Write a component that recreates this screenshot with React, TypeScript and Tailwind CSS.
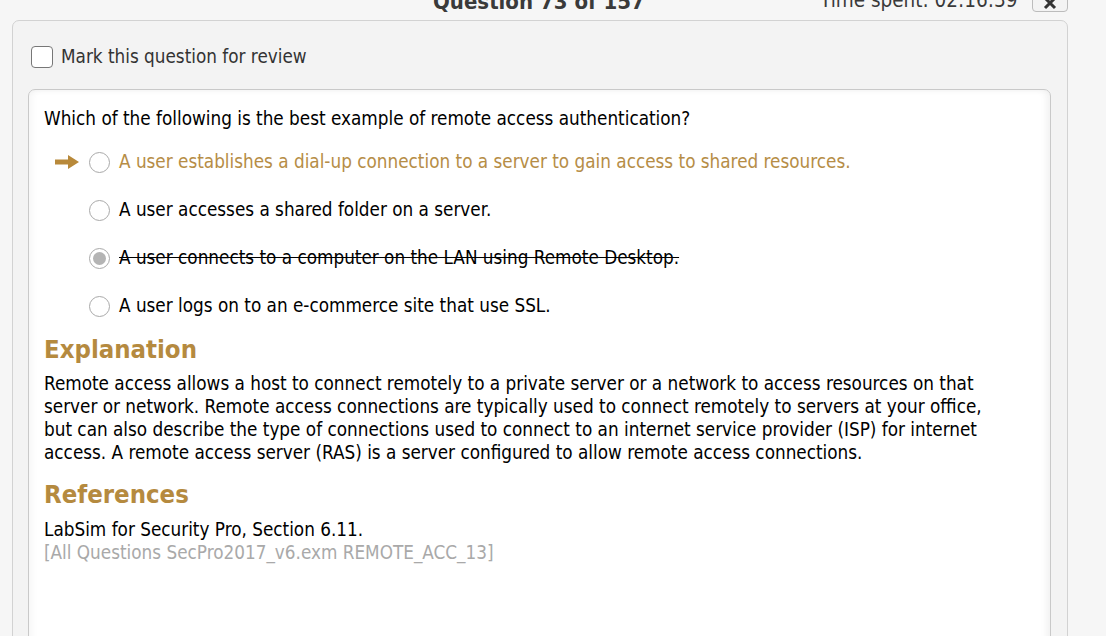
import React from 'react';

const gold = 'text-[#b58a3f]';

interface Option {
  text: string;
  state: 'correct' | 'plain' | 'picked';
}

const options: Option[] = [
  { text: 'A user establishes a dial-up connection to a server to gain access to shared resources.', state: 'correct' },
  { text: 'A user accesses a shared folder on a server.', state: 'plain' },
  { text: 'A user connects to a computer on the LAN using Remote Desktop.', state: 'picked' },
  { text: 'A user logs on to an e-commerce site that use SSL.', state: 'plain' },
];

const Arrow = () => (
  <svg width="24" height="14" viewBox="0 0 24 14">
    <path d="M0 4.5h13V0l11 7-11 7V9.5H0z" fill="#b8893a" />
  </svg>
);

const Radio = ({ checked }: { checked: boolean }) => (
  <span className="flex h-[21px] w-[21px] shrink-0 items-center justify-center rounded-full border border-[#a9a9a9] bg-white">
    {checked && <span className="h-[13px] w-[13px] rounded-full bg-[#b4b4b4]" />}
  </span>
);

const OptionRow = ({ option }: { option: Option }) => (
  <div className="flex h-[48px] items-center">
    <div className="flex w-[45px] shrink-0 items-center pl-[11px]">
      {option.state === 'correct' && <Arrow />}
    </div>
    <Radio checked={option.state === 'picked'} />
    <span
      className={
        option.state === 'correct'
          ? 'ml-[9px] text-[#b68d46]'
          : option.state === 'picked'
            ? 'ml-[9px] text-black line-through'
            : 'ml-[9px] text-black'
      }
    >
      {option.text}
    </span>
  </div>
);

export default function App() {
  return (
    <div
      className="h-[636px] w-[1106px] overflow-hidden bg-[#f6f6f6] text-[18.75px]"
      style={{ fontFamily: '"DejaVu Sans Condensed", Tahoma, "DejaVu Sans", sans-serif' }}
    >
      {/* header, mostly scrolled off the top */}
      <div className="relative flex h-[20px] items-end overflow-hidden">
        <div className="absolute left-[433px] bottom-[7px] text-[22px] font-bold leading-none text-[#3a3a3a]">
          Question 73 of 157
        </div>
        <div className="absolute left-[820px] bottom-[10px] text-[20.5px] leading-none text-[#3a3a3a]">
          Time spent: 02:16:39
        </div>
        <div className="absolute left-[1032px] bottom-[8px] flex h-[26px] w-[36px] items-end justify-center rounded-[4px] border border-[#bcbcbc] bg-[#f3f3f3] pb-[1px]">
          <svg width="14" height="14" viewBox="0 0 14 14">
            <path d="M2 2l10 10M12 2L2 12" stroke="#333" strokeWidth="3" />
          </svg>
        </div>
      </div>

      <div className="ml-[12px] h-[640px] w-[1056px] rounded-t-[7px] border border-[#d2d2d2] bg-[#f3f3f3] px-[15px] pt-[22px]">
        <label className="ml-[3px] flex items-center text-[#333]">
          <span className="h-[22px] w-[22px] rounded-[4px] border border-[#777] bg-white" />
          <span className="ml-[8px]">Mark this question for review</span>
        </label>

        <div className="mt-[18px] mr-[1px] h-[600px] rounded-t-[7px] border border-[#c9c9c9] bg-white px-[15px] pt-[17px] text-black shadow-[inset_-4px_0_6px_rgba(0,0,0,0.05),inset_4px_0_6px_rgba(0,0,0,0.03)]">
          <p className="leading-[23px]">Which of the following is the best example of remote access authentication?</p>
          <div className="mt-[8px]">
            {options.map((o) => (
              <OptionRow key={o.text} option={o} />
            ))}
          </div>

          <h2 className={`mt-[2px] mb-[6px] text-[25.5px] font-bold leading-[34px] ${gold}`}>Explanation</h2>
          <p className="leading-[23px]">
            Remote access allows a host to connect remotely to a private server or a network to access resources on that
            <br />
            server or network. Remote access connections are typically used to connect remotely to servers at your office,
            <br />
            but can also describe the type of connections used to connect to an internet service provider (ISP) for internet
            <br />
            access. A remote access server (RAS) is a server configured to allow remote access connections.
          </p>

          <h2 className={`mt-[13px] mb-[7px] text-[25.5px] font-bold leading-[34px] ${gold}`}>References</h2>
          <p className="leading-[23px]">LabSim for Security Pro, Section 6.11.</p>
          <p className="leading-[23px] text-[#a9a9a9]">[All Questions SecPro2017_v6.exm REMOTE_ACC_13]</p>
        </div>
      </div>
    </div>
  );
}
